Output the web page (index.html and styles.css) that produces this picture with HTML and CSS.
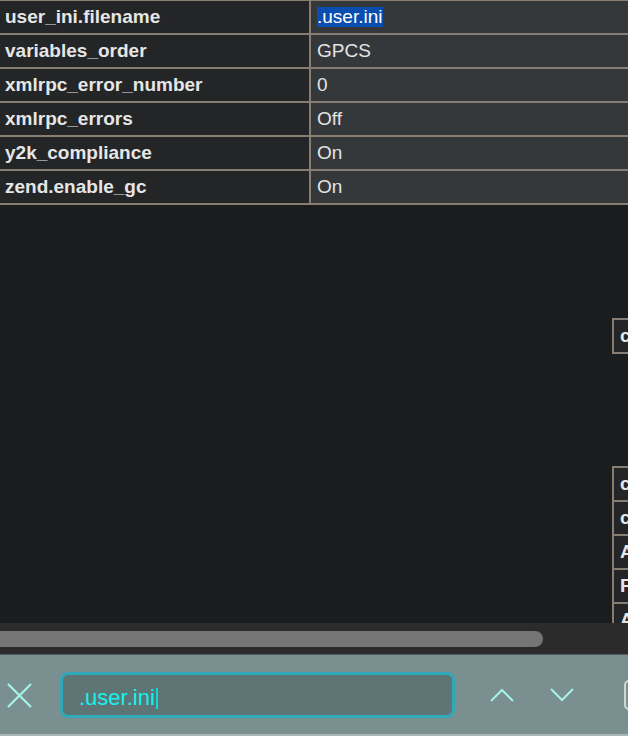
FILE: index.html
```html
<!DOCTYPE html>
<html>
<head>
<meta charset="utf-8">
<link rel="stylesheet" href="styles.css">
</head>
<body>
<div class="page">
  <div class="content">
    <table class="ini">
      <tr><td class="k">user_ini.filename</td><td class="v"><span class="sel">.user.ini</span></td></tr>
      <tr><td class="k">variables_order</td><td class="v">GPCS</td></tr>
      <tr><td class="k">xmlrpc_error_number</td><td class="v">0</td></tr>
      <tr><td class="k">xmlrpc_errors</td><td class="v">Off</td></tr>
      <tr><td class="k">y2k_compliance</td><td class="v">On</td></tr>
      <tr><td class="k">zend.enable_gc</td><td class="v">On</td></tr>
    </table>
    <div class="side">
      <table class="mini first">
        <tr><td class="k">c</td></tr>
      </table>
      <table class="mini second">
        <tr><td class="k">c</td></tr>
        <tr><td class="k">c</td></tr>
        <tr><td class="k">A</td></tr>
        <tr><td class="k">F</td></tr>
        <tr><td class="k">A</td></tr>
      </table>
    </div>
  </div>
  <div class="hscroll"><div class="thumb"></div></div>
  <div class="findbar">
    <svg class="close" width="25" height="25" viewBox="0 0 25 25"><path d="M1 1 L24 24 M24 1 L1 24" stroke="#a4f3ea" stroke-width="2.2" fill="none"/></svg>
    <div class="search"><span class="q">.user.ini</span><span class="caret"></span></div>
    <svg class="up" width="24" height="14" viewBox="0 0 24 14"><path d="M1 13 L12 2 L23 13" stroke="#a4f3ea" stroke-width="2" fill="none"/></svg>
    <svg class="down" width="24" height="14" viewBox="0 0 24 14"><path d="M1 1 L12 12 L23 1" stroke="#a4f3ea" stroke-width="2" fill="none"/></svg>
    <div class="check"></div>
  </div>
</div>
</body>
</html>
```
FILE: styles.css
```css
html, body {
  margin: 0;
  padding: 0;
  background: #1b1c1e;
  overflow: hidden;
}
.page {
  width: 628px;
  height: 736px;
  display: flex;
  flex-direction: column;
  overflow: hidden;
}
.content {
  height: 623px;
  overflow: hidden;
  flex: none;
}
.ini {
  border-collapse: separate;
  border-spacing: 2px;
  background: #877e71;
  table-layout: fixed;
  width: 700px;
  margin: -1px 0 0 -2px;
  font-family: "Liberation Sans", Arial, sans-serif;
  font-size: 19px;
}
.ini td {
  height: 32px;
  padding: 0 5px;
  box-sizing: border-box;
  white-space: nowrap;
  overflow: hidden;
}
.k {
  background: #232527;
  color: #e6e6e6;
  font-weight: bold;
}
.ini .k {
  width: 309px;
  padding-left: 5px;
}
.v {
  background: #35383b;
  color: #e4e4e4;
}
.ini .v {
  padding-left: 6px;
}
.sel {
  display: inline-block;
  background: #0a4db0;
  color: #ffffff;
  line-height: 20px;
  padding: 0 1px 0 0;
}
.side {
  margin-left: 612px;
}
.mini {
  border-collapse: separate;
  border-spacing: 2px;
  background: #877e71;
  font-family: "Liberation Sans", Arial, sans-serif;
  font-size: 19px;
  width: 80px;
  margin-top: 113px;
}
.mini.second {
  margin-top: 112px;
}
.mini td {
  height: 32px;
  padding: 0 6px;
  box-sizing: border-box;
}
.hscroll {
  flex: none;
  height: 31px;
  background: #2b2b2b;
  padding-top: 8px;
  box-sizing: border-box;
}
.thumb {
  width: 543px;
  height: 16px;
  background: #757575;
  border-radius: 0 8px 8px 0;
}
.findbar {
  flex: none;
  height: 82px;
  box-sizing: border-box;
  background: #7a8f90;
  border-top: 1px solid #4e5e5f;
  border-bottom: 2px solid #a7b6b6;
  display: flex;
  align-items: center;
  padding-left: 7px;
}
.close {
  flex: none;
  margin-top: 2px;
}
.search {
  flex: none;
  margin-left: 28px;
  width: 395px;
  height: 46px;
  box-sizing: border-box;
  border: 3px solid #31a9ba;
  border-radius: 8px;
  background: #5e7576;
  display: flex;
  align-items: center;
  padding-left: 16px;
  padding-top: 7px;
  font-family: "Liberation Sans", Arial, sans-serif;
  font-size: 22px;
  color: #14f3ec;
}
.caret {
  display: inline-block;
  width: 2px;
  height: 21px;
  background: #10d8d8;
  margin-left: 1px;
}
.up {
  flex: none;
  margin-left: 35px;
  margin-top: 1px;
}
.down {
  flex: none;
  margin-left: 36px;
  margin-top: 0px;
}
.check {
  flex: none;
  margin-left: 50px;
  width: 20px;
  height: 30px;
  box-sizing: border-box;
  border: 2px solid #cfd6d6;
  border-radius: 5px;
}
```
